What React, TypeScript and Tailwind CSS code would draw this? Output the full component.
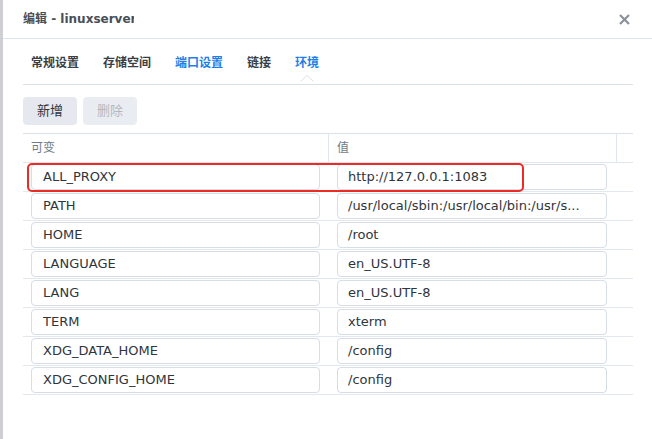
import React from "react";

const rows: [string, string][] = [
  ["ALL_PROXY", "http://127.0.0.1:1083"],
  ["PATH", "/usr/local/sbin:/usr/local/bin:/usr/s..."],
  ["HOME", "/root"],
  ["LANGUAGE", "en_US.UTF-8"],
  ["LANG", "en_US.UTF-8"],
  ["TERM", "xterm"],
  ["XDG_DATA_HOME", "/config"],
  ["XDG_CONFIG_HOME", "/config"],
];

const font = { fontFamily: '"DejaVu Sans", "Noto Sans CJK SC", sans-serif' };

export default function App() {
  const tabs = [
    { t: "常规设置", blue: false },
    { t: "存储空间", blue: false },
    { t: "端口设置", blue: true },
    { t: "链接", blue: false },
    { t: "环境", blue: true, active: true },
  ];
  return (
    <div className="flex h-[439px] w-[652px] overflow-hidden bg-white" style={font}>
      <div className="w-[3px] shrink-0 bg-[#cdcfd2]" />
      <div className="flex flex-1 flex-col bg-white">
        {/* header */}
        <div className="flex h-[39px] shrink-0 items-center justify-between border-b border-[#dfe5ec] pl-[20px] pr-[22px]">
          <div className="w-[111px] overflow-hidden whitespace-nowrap text-[12px] font-bold text-[#4a4f57]">
            编辑 - linuxserver
          </div>
          <svg width="11" height="11" viewBox="0 0 11 11">
            <path d="M1 1 L10 10 M10 1 L1 10" stroke="#8b9099" strokeWidth="2.2" strokeLinecap="butt" />
          </svg>
        </div>
        {/* body */}
        <div className="flex flex-col pl-[20px] pr-[19px]">
          <div className="relative flex h-[46px] items-center gap-[24px] border-b border-[#d9e0e8] pl-[8px] pt-[3px]">
            {tabs.map((tb) => (
              <div
                key={tb.t}
                className={`relative text-[12px] font-semibold ${tb.blue ? "text-[#1f7fe6]" : "text-[#3a3f46]"}`}
              >
                {tb.t}
                {tb.active && (
                  <svg
                    className="absolute left-1/2 top-[21px] -translate-x-1/2"
                    width="13"
                    height="7"
                    viewBox="0 0 13 7"
                  >
                    <path d="M0 6.5 L6.5 0.5 L13 6.5" fill="white" stroke="#d9e0e8" strokeWidth="1" />
                  </svg>
                )}
              </div>
            ))}
          </div>
          <div className="mt-[12px] flex gap-[6px]">
            <div className="flex h-[28px] w-[54px] items-center justify-center rounded-[4px] bg-[#e5e9ef] text-[13px] text-[#2f343b]">
              新增
            </div>
            <div className="flex h-[28px] w-[54px] items-center justify-center rounded-[4px] bg-[#e9edf2] text-[13px] text-[#b3b8bf]">
              删除
            </div>
          </div>
          <div className="relative mt-[8px] w-[610px] border-t border-[#d9e0e8]">
            <div className="flex h-[29px] border-b border-[#e1e6ec] text-[12px] text-[#737a83]">
              <div className="flex w-[305px] items-center pl-[8px]">可变</div>
              <div className="flex w-[288px] items-center border-l border-[#e1e6ec] pl-[8px]">值</div>
              <div className="flex-1 border-l border-[#e1e6ec]" />
            </div>
            {rows.map(([k, v]) => (
              <div key={k} className="flex h-[29px] items-center border-b border-[#e3e8ee] text-[13px] text-[#30353c]">
                <div className="w-[305px] px-[8px]">
                  <div className="flex h-[26px] items-center overflow-hidden whitespace-nowrap rounded-[4px] border border-[#d6dde6] pl-[11px]">
                    {k}
                  </div>
                </div>
                <div className="w-[288px] pl-[9px] pr-[9px]">
                  <div className="flex h-[26px] items-center overflow-hidden whitespace-nowrap rounded-[4px] border border-[#d6dde6] pl-[10px]">
                    {v}
                  </div>
                </div>
              </div>
            ))}
            <div className="absolute left-[4px] top-[29px] h-[29px] w-[497px] rounded-[5px] border-2 border-[#ee2a24]" />
          </div>
        </div>
      </div>
    </div>
  );
}
